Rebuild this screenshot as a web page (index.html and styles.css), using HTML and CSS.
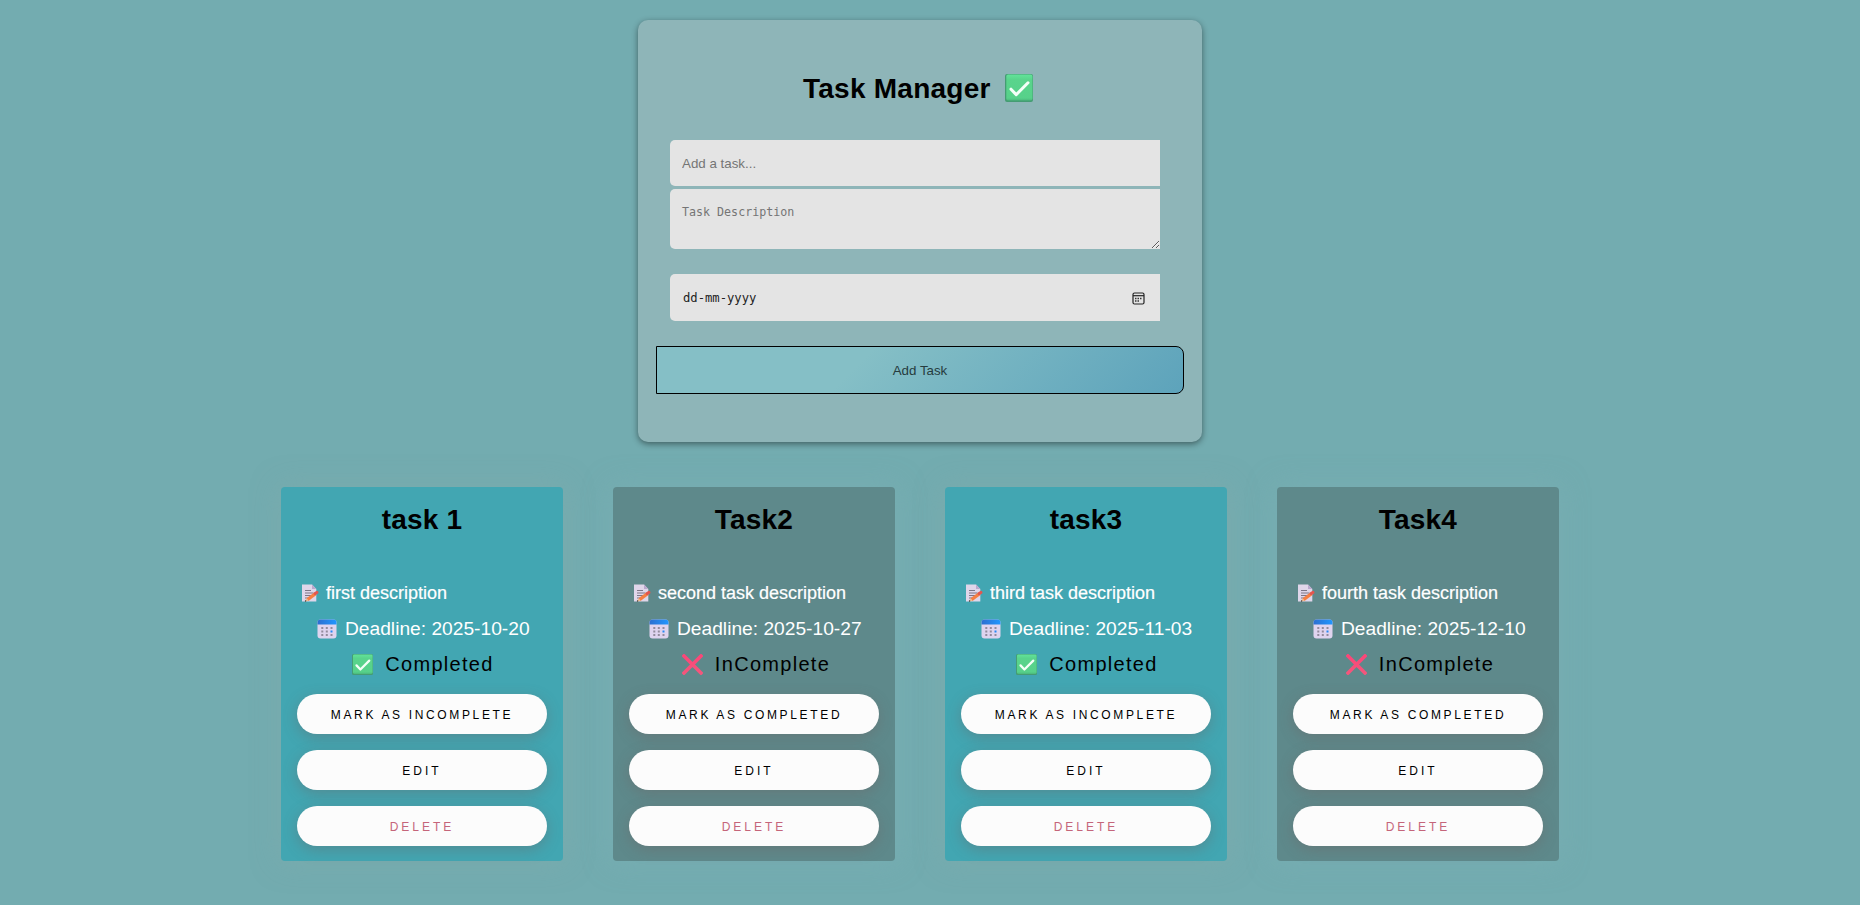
FILE: index.html
```html
<!DOCTYPE html>
<html lang="en">
<head>
<meta charset="utf-8">
<title>Task Manager</title>
<link rel="stylesheet" href="styles.css">
</head>
<body>
<svg class="defs" width="0" height="0" aria-hidden="true">
  <defs>
    <linearGradient id="g" x1="0" y1="0" x2="0" y2="1"><stop offset="0" stop-color="#62e39a"/><stop offset=".2" stop-color="#59d48c"/><stop offset=".9" stop-color="#57d18a"/><stop offset="1" stop-color="#4bb87c"/></linearGradient>
    <linearGradient id="b" x1="0" x2="1"><stop offset="0" stop-color="#2c6fd0"/><stop offset="1" stop-color="#2196ff"/></linearGradient>
    <linearGradient id="r" x1="0" y1="0" x2="0" y2="1"><stop offset="0" stop-color="#fb4678"/><stop offset="1" stop-color="#f4567c"/></linearGradient>
  </defs>
  <symbol id="check" viewBox="0 0 28 28">
    <rect width="28" height="28" rx="2" fill="#459c73"/>
    <rect x="1.3" y=".6" width="26.2" height="26" rx="1.8" fill="url(#g)"/>
    <path d="M6 15.2l5.2 5.4L23 8.8" fill="none" stroke="#f4fff8" stroke-width="3" stroke-linecap="round" stroke-linejoin="round"/>
  </symbol>
  <symbol id="cross" viewBox="0 0 21 21">
    <path d="M2 2l17 17M19 2L2 19" fill="none" stroke="url(#r)" stroke-width="3.6" stroke-linecap="square"/>
  </symbol>
  <symbol id="memo" viewBox="0 0 17 18">
    <path d="M0 .5h10L14.300 5v12.500H0z" fill="#dfd6ea"/>
    <path d="M10 .5V5h4.300z" fill="#b9a9cd"/>
    <path d="M3 6.500h6M3 9h8.500M3 11.500h8M3 14h3" stroke="#7d7687" stroke-width="1"/>
    <path d="M5.500 15.600l8-6" stroke="#f57f43" stroke-width="3.200"/>
    <path d="M13.300 9.500l1.500-1" stroke="#e2564f" stroke-width="3.200" stroke-linecap="round"/>
    <path d="M3.200 17.400l1-3.200 2.200 2.500z" fill="#f3bd8b"/>
    <circle cx="3.600" cy="17" r=".7" fill="#333"/>
  </symbol>
  <symbol id="cal" viewBox="0 0 20 20">
    <rect x=".5" y=".5" width="19" height="19" rx="3" fill="#dfd4ef"/>
    <path d="M.5 5.500v-2a3 3 0 0 1 3-3h13a3 3 0 0 1 3 3v2z" fill="url(#b)"/>
    <path d="M4.300 8h2v2h-2zm4.500 0h2v2h-2zm4.700 0h2v2h-2zM4.300 11.500h2v2h-2zm4.500 0h2v2h-2zM4.300 15h2v2h-2zm4.500 0h2v2h-2zm4.700 0h2v2h-2z" fill="#938b9d"/>
    <path d="M13.500 11.500h2v2h-2z" fill="#2688f5"/>
  </symbol>
</svg>
<main class="page">
  <form class="manager">
    <h1 class="manager-title"><span>Task Manager</span><svg class="title-icon"><use href="#check"/></svg></h1>
    <div class="fields">
      <input class="field task-name" type="text" placeholder="Add a task...">
      <textarea class="field task-desc" placeholder="Task Description"></textarea>
      <div class="field task-date">
        <span>dd-mm-yyyy</span>
        <svg class="date-icon" viewBox="0 0 13 13"><rect x="1" y="1" width="11" height="11" rx="1.500" fill="none" stroke="#222" stroke-width="1.200"/><path d="M1 3.700h11" stroke="#222" stroke-width="1.200"/><path d="M3 6.500h1.500m1 0H7m1 0h1.500M3 9h1.500m1 0H7" stroke="#333" stroke-width="1.300"/></svg>
      </div>
    </div>
    <button class="add" type="button">Add Task</button>
  </form>

  <section class="tasks">
    <article class="task done">
      <h2 class="task-title">task 1</h2>
      <p class="desc"><svg class="memo"><use href="#memo"/></svg><span>first description</span></p>
      <p class="deadline"><svg class="cal"><use href="#cal"/></svg><span>Deadline: 2025-10-20</span></p>
      <p class="status"><svg class="state"><use href="#check"/></svg><span>Completed</span></p>
      <button class="pill toggle">Mark as Incomplete</button>
      <button class="pill">Edit</button>
      <button class="pill delete">Delete</button>
    </article>
    <article class="task">
      <h2 class="task-title">Task2</h2>
      <p class="desc"><svg class="memo"><use href="#memo"/></svg><span>second task description</span></p>
      <p class="deadline"><svg class="cal"><use href="#cal"/></svg><span>Deadline: 2025-10-27</span></p>
      <p class="status"><svg class="state"><use href="#cross"/></svg><span>InComplete</span></p>
      <button class="pill toggle">Mark as Completed</button>
      <button class="pill">Edit</button>
      <button class="pill delete">Delete</button>
    </article>
    <article class="task done">
      <h2 class="task-title">task3</h2>
      <p class="desc"><svg class="memo"><use href="#memo"/></svg><span>third task description</span></p>
      <p class="deadline"><svg class="cal"><use href="#cal"/></svg><span>Deadline: 2025-11-03</span></p>
      <p class="status"><svg class="state"><use href="#check"/></svg><span>Completed</span></p>
      <button class="pill toggle">Mark as Incomplete</button>
      <button class="pill">Edit</button>
      <button class="pill delete">Delete</button>
    </article>
    <article class="task">
      <h2 class="task-title">Task4</h2>
      <p class="desc"><svg class="memo"><use href="#memo"/></svg><span>fourth task description</span></p>
      <p class="deadline"><svg class="cal"><use href="#cal"/></svg><span>Deadline: 2025-12-10</span></p>
      <p class="status"><svg class="state"><use href="#cross"/></svg><span>InComplete</span></p>
      <button class="pill toggle">Mark as Completed</button>
      <button class="pill">Edit</button>
      <button class="pill delete">Delete</button>
    </article>
  </section>
</main>
</body>
</html>
```
FILE: styles.css
```css
* { box-sizing: border-box; }
body {
  margin: 0;
  height: 905px;
  overflow: hidden;
  background: #73acb0;
  font-family: "Liberation Sans", Arial, sans-serif;
}
.defs { display: block; }
.page {
  display: flex;
  flex-direction: column;
  align-items: center;
  padding: 20px 20px 0 0;
}
.manager {
  width: 564px;
  height: 422px;
  padding: 54px 18px 0;
  border-radius: 10px;
  background: #8eb5b8;
  box-shadow: 0 2px 6px rgba(0, 0, 0, .45);
}
.manager-title {
  display: flex;
  gap: 14px;
  margin: 0 0 38px 147px;
  height: 28px;
  font-size: 28px;
  line-height: 29px;
  letter-spacing: .25px;
  white-space: nowrap;
}
.title-icon { width: 28px; height: 28px; }
.fields {
  display: flex;
  flex-direction: column;
  width: 490px;
  margin-left: 14px;
}
.field {
  width: 490px;
  margin: 0;
  border: 0;
  border-radius: 5px 0 0 5px;
  background: #e4e4e4;
  color: #333;
}
.field::placeholder { color: #757575; opacity: 1; }
.task-name {
  height: 46px;
  padding: 0 12px;
  font: 13.33px "Liberation Sans", Arial, sans-serif;
}
.task-desc {
  height: 60px;
  margin-top: 3px;
  padding: 16px 12px;
  font: 11.67px "DejaVu Sans Mono", monospace;
}
.task-date {
  display: flex;
  align-items: center;
  justify-content: space-between;
  height: 47px;
  margin-top: 25px;
  padding: 1px 15px 0 13px;
  font: 12.2px "DejaVu Sans Mono", monospace;
  color: #222;
}
.date-icon { width: 13px; height: 13px; }
.add {
  display: block;
  width: 528px;
  height: 48px;
  margin-top: 25px;
  padding: 1px 0 0;
  border: 1px solid #000;
  border-radius: 0 8px 8px 0;
  background: linear-gradient(135deg, #85bfc6 38%, #5da3bb);
  color: #263c3e;
  font: 13.33px "Liberation Sans", Arial, sans-serif;
}
.tasks {
  display: flex;
  gap: 50px;
  margin-top: 45px;
}
.task {
  width: 282px;
  height: 374px;
  padding: 17px 16px 16px;
  border-radius: 4px;
  background: #5e898b;
  box-shadow: 0 0 28px rgba(125, 175, 182, .5);
}
.done {
  background: #42a6b2;
  box-shadow: 0 0 28px rgba(132, 170, 170, .5);
}
.task-title {
  height: 32px;
  margin: 0 0 47px;
  font-size: 28px;
  line-height: 32px;
  letter-spacing: .2px;
  text-align: center;
}
.task p {
  display: flex;
  align-items: center;
  margin: 0;
  white-space: nowrap;
}
.desc {
  height: 20px;
  gap: 7px;
  padding-left: 5px;
  color: #fff;
  font-size: 18px;
  -webkit-text-stroke: .2px #fff;
}
.deadline {
  height: 51px;
  gap: 8px;
  padding-left: 20px;
  color: #fff;
  font-size: 19.2px;
}
.status {
  justify-content: center;
  height: 21px;
  gap: 12px;
  font-size: 20px;
  letter-spacing: 1.3px;
}
.task .status { padding-left: 4px; }
.task.done .status { padding-left: 2px; }
.memo { width: 17px; height: 18px; }
.cal { width: 20px; height: 20px; }
.state { width: 21px; height: 21px; }
.pill {
  display: block;
  width: 250px;
  height: 40px;
  margin: 0 0 16px;
  padding: 2px 0 0;
  border: 0;
  border-radius: 20px;
  background: #fcfcfc;
  box-shadow: 0 4px 14px rgba(110, 95, 95, .36);
  color: #000;
  font: 12px "Liberation Sans", Arial, sans-serif;
  letter-spacing: 3px;
  text-transform: uppercase;
}
.toggle {
  margin-top: 19px;
  letter-spacing: 2.65px;
}
.delete { color: #c5657a; }
```
